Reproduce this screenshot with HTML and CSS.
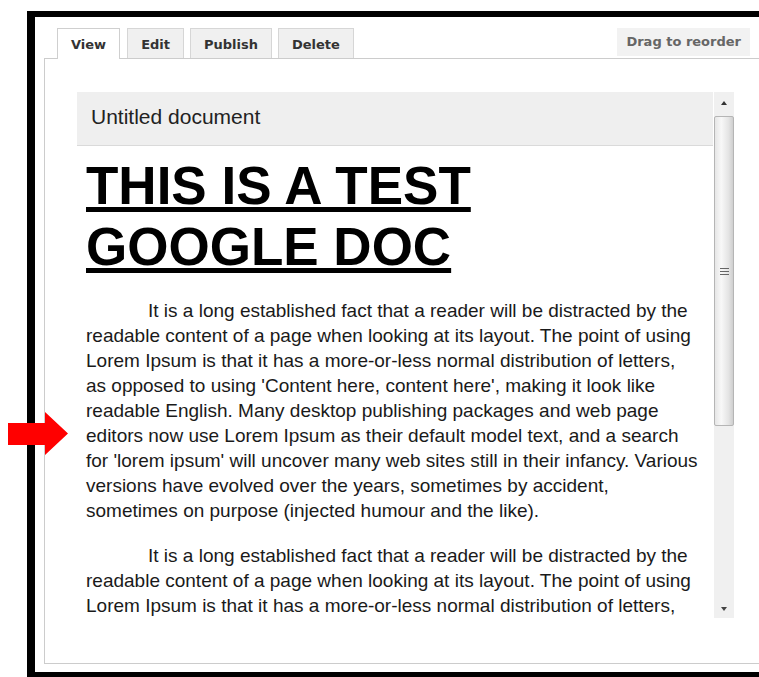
FILE: index.html
```html
<!DOCTYPE html>
<html lang="en">
<head>
<meta charset="utf-8">
<title>Untitled document</title>
<link rel="stylesheet" href="styles.css">
</head>
<body>
<div class="frame">
  <div class="tabs">
    <span class="tab active">View</span>
    <span class="tab">Edit</span>
    <span class="tab">Publish</span>
    <span class="tab">Delete</span>
    <span class="drag">Drag to reorder</span>
  </div>
  <div class="panel">
    <div class="doc">
      <div class="doc-main">
        <div class="doc-title">Untitled document</div>
        <div class="doc-body">
          <h1 class="doc-heading">THIS IS A TEST<br>GOOGLE DOC</h1>
          <p class="doc-para">It is a long established fact that a reader will be distracted by the<br>readable content of a page when looking at its layout. The point of using<br>Lorem Ipsum is that it has a more-or-less normal distribution of letters,<br>as opposed to using 'Content here, content here', making it look like<br>readable English. Many desktop publishing packages and web page<br>editors now use Lorem Ipsum as their default model text, and a search<br>for 'lorem ipsum' will uncover many web sites still in their infancy. Various<br>versions have evolved over the years, sometimes by accident,<br>sometimes on purpose (injected humour and the like).</p>
          <p class="doc-para">It is a long established fact that a reader will be distracted by the<br>readable content of a page when looking at its layout. The point of using<br>Lorem Ipsum is that it has a more-or-less normal distribution of letters,<br>as opposed to using 'Content here, content here', making it look like<br>readable English. Many desktop publishing packages and web page<br>editors now use Lorem Ipsum as their default model text, and a search<br>for 'lorem ipsum' will uncover many web sites still in their infancy. Various<br>versions have evolved over the years, sometimes by accident,<br>sometimes on purpose (injected humour and the like).</p>
        </div>
      </div>
      <div class="scrollbar">
        <div class="sb-btn"><span class="sb-up"></span></div>
        <div class="sb-thumb"><span class="grip"></span><span class="grip"></span><span class="grip"></span></div>
        <div class="sb-track"></div>
        <div class="sb-btn"><span class="sb-down"></span></div>
      </div>
    </div>
  </div>
</div>
<svg class="pointer" width="61" height="44" viewBox="0 0 61 44">
  <polygon points="0,11 37,11 37,0 60,21.5 37,43 37,33 0,33" fill="#ff0000"/>
</svg>
</body>
</html>
```

FILE: styles.css
```css
html, body {
  margin: 0;
  padding: 0;
  background: #ffffff;
  overflow: hidden;
}

body {
  width: 759px;
  height: 677px;
  position: relative;
  padding-top: 11px;
  box-sizing: border-box;
}

.frame {
  margin-left: 27px;
  width: 732px;
  border-top: 6px solid #000;
  border-left: 8px solid #000;
  border-bottom: 5px solid #000;
  padding: 11px 0 8px 9px;
  box-sizing: border-box;
}

.tabs {
  display: flex;
  align-items: flex-end;
  height: 30px;
  padding: 0 9px 0 13px;
  font-family: "DejaVu Sans", Verdana, sans-serif;
  font-weight: bold;
  font-size: 13px;
}

.tab {
  height: 30px;
  line-height: 29px;
  padding: 1px 13px 0;
  margin-right: 6px;
  border: 1px solid #d6d6d6;
  border-bottom: 0;
  background: #f0f0f0;
  color: #333;
  box-sizing: border-box;
}

.tab.active {
  position: relative;
  z-index: 1;
  height: 31px;
  margin-bottom: -1px;
  margin-right: 7px;
  background: #fff;
  border-color: #cfcfcf;
}

.drag {
  margin-left: auto;
  align-self: flex-start;
  height: 28px;
  line-height: 28px;
  padding: 0 9px;
  background: #f2f2f2;
  color: #666;
}

.panel {
  border: 1px solid #cccccc;
  border-right: 0;
  padding: 33px 0 45px 32px;
  background: #fff;
}

.doc {
  display: flex;
  width: 657px;
  height: 526px;
}

.doc-main {
  width: 637px;
  overflow: hidden;
  font-family: "Liberation Sans", Arial, sans-serif;
}

.doc-title {
  background: #efefef;
  border-bottom: 1px solid #dadada;
  padding: 13px 14px 16px;
  line-height: 24px;
  font-size: 21px;
  color: #222;
}

.doc-body {
  padding-left: 9px;
}

.doc-heading {
  margin: 9px 0 0;
  font-size: 53px;
  line-height: 61px;
  font-weight: bold;
  text-decoration: underline;
  color: #000;
  white-space: nowrap;
}

.doc-para {
  margin: 21px 0 0;
  font-size: 19px;
  line-height: 25px;
  color: #1a1a1a;
  text-indent: 62px;
  white-space: nowrap;
}

.doc-para + .doc-para {
  margin-top: 20px;
}

.scrollbar {
  width: 20px;
  margin-left: 1px;
  display: flex;
  flex-direction: column;
  background: #f0f0f0;
}

.sb-btn {
  height: 22px;
  display: flex;
  align-items: center;
  justify-content: center;
}

.sb-up {
  width: 0;
  height: 0;
  border-left: 3.5px solid transparent;
  border-right: 3.5px solid transparent;
  border-bottom: 4px solid #333;
}

.sb-down {
  width: 0;
  height: 0;
  border-left: 3.5px solid transparent;
  border-right: 3.5px solid transparent;
  border-top: 4px solid #444;
  margin-top: 4px;
}

.sb-thumb {
  margin-top: 2px;
  height: 310px;
  border: 1px solid #b5b5b5;
  border-radius: 2px;
  background: linear-gradient(to right, #e6e6e6 0%, #f8f8f8 35%, #e4e4e4 75%, #cfcfcf 100%);
  box-sizing: border-box;
  display: flex;
  flex-direction: column;
  align-items: center;
  justify-content: center;
  gap: 2px;
}

.grip {
  display: block;
  width: 9px;
  height: 1px;
  background: #666;
}

.sb-track {
  flex: 1;
}

.pointer {
  position: absolute;
  left: 8px;
  top: 412px;
}
```
